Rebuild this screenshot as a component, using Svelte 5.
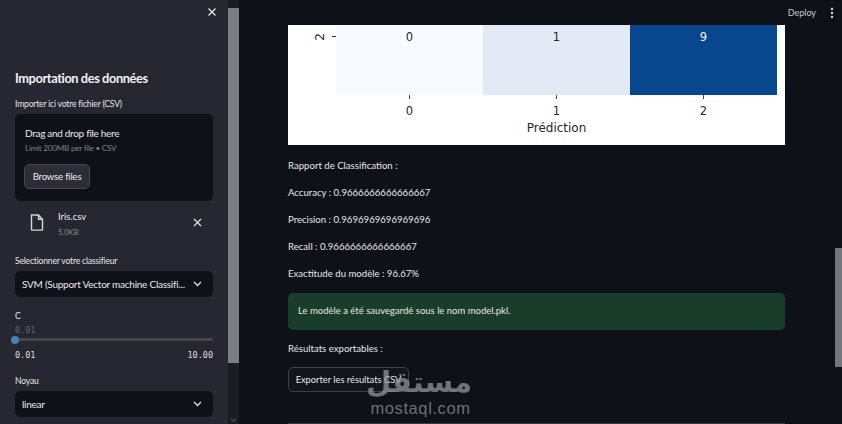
<script>
  let metrics = [
    "Rapport de Classification :",
    "Accuracy : 0.9666666666666667",
    "Precision : 0.9696969696969696",
    "Recall : 0.9666666666666667",
    "Exactitude du modèle : 96.67%"
  ];
  let cells = [
    { value: 0, tone: "c-low" },
    { value: 1, tone: "c-mid" },
    { value: 9, tone: "c-high" }
  ];
</script>

<div class="page">
  <aside class="sidebar">
    <div class="side-inner">
      <div class="close-row">
        <svg width="10" height="10" viewBox="0 0 10 10"><path d="M1.5 1.5l7 7M8.500 1.500l-7 7" stroke="#e6e6ea" stroke-width="1.300" /></svg>
      </div>
      <h2>Importation des données</h2>
      <div class="label first">Importer ici votre fichier (CSV)</div>
      <div class="upload">
        <div class="drag">Drag and drop file here</div>
        <div class="limit">Limit 200MB per file • CSV</div>
        <button class="browse">Browse files</button>
      </div>
      <div class="file">
        <svg class="file-icon" width="14" height="17" viewBox="0 0 14 17" fill="none"><path d="M1.500 1h7l4 4.200V15.500a.6.6 0 0 1-.6.6H2.100a.6.6 0 0 1-.6-.6zM8.500 1v4.200h4" stroke="#d5d6da" stroke-width="1.400" /></svg>
        <div class="file-text">
          <div class="file-name">Iris.csv</div>
          <div class="file-size">5.0KB</div>
        </div>
        <svg class="file-x" width="9" height="9" viewBox="0 0 9 9"><path d="M1 1l7 7M8 1l-7 7" stroke="#e0e0e4" stroke-width="1.300" /></svg>
      </div>
      <div class="label sel-label">Selectionner votre classifieur</div>
      <div class="select">
        <span class="sel-text">SVM (Support Vector machine Classifi...</span>
        <svg width="9" height="6" viewBox="0 0 9 6"><path d="M1 1l3.500 3.500L8 1" fill="none" stroke="#e0e0e4" stroke-width="1.300" /></svg>
      </div>
      <div class="label c-label">C</div>
      <div class="mono current">0.01</div>
      <div class="track"><span class="thumb"></span></div>
      <div class="mono range"><span>0.01</span><span>10.00</span></div>
      <div class="label noyau">Noyau</div>
      <div class="select">
        <span class="sel-text">linear</span>
        <svg width="9" height="6" viewBox="0 0 9 6"><path d="M1 1l3.500 3.500L8 1" fill="none" stroke="#e0e0e4" stroke-width="1.300" /></svg>
      </div>
    </div>
    <div class="side-scroll">
      <div class="thumb-bar"></div>
      <svg class="down" width="7" height="5" viewBox="0 0 7 5"><path d="M1 1l2.500 2.500L6 1" fill="none" stroke="#6d6e73" stroke-width="1" /></svg>
    </div>
  </aside>

  <main class="main">
    <header class="top">
      <span class="deploy">Deploy</span>
      <svg width="4" height="12" viewBox="0 0 4 12"><circle cx="2" cy="2" r="1.200" fill="#d8d8dc" /><circle cx="2" cy="6" r="1.200" fill="#d8d8dc" /><circle cx="2" cy="10" r="1.200" fill="#d8d8dc" /></svg>
    </header>

    <div class="content">
      <figure class="plot">
        <div class="plot-row">
          <div class="y-axis">
            <span class="y-num">2</span>
            <span class="y-tick"></span>
          </div>
          <div class="cells">
            {#each cells as cell}
              <div class="cell {cell.tone}">{cell.value}</div>
            {/each}
          </div>
        </div>
        <div class="x-axis">
          {#each cells as cell, i}
            <div class="x-col"><span class="x-tick"></span><span>{i}</span></div>
          {/each}
        </div>
        <div class="x-title">Prédiction</div>
      </figure>

      <div class="metrics">
        {#each metrics as line}
          <p>{line}</p>
        {/each}
      </div>

      <div class="success">Le modèle a été sauvegardé sous le nom model.pkl.</div>

      <p class="export-label">Résultats exportables :</p>
      <button class="export">Exporter les résultats CSV</button>
    </div>

    <div class="main-scroll"></div>
    <div class="bottom-line"></div>

    <div class="watermark">
      <div class="wm-ar" dir="rtl">مستقل</div>
      <div class="wm-en">mostaql.com</div>
    </div>
  </main>
</div>

<style>
  :global(body) {
    margin: 0;
    background: #0e1117;
    overflow: hidden;
  }

  .page {
    display: flex;
    width: 842px;
    height: 424px;
    overflow: hidden;
    font-family: Lato, "Noto Sans", sans-serif;
    color: #f0f1f3;
  }

  .sidebar {
    display: flex;
    width: 239px;
    flex: none;
    background: #262730;
  }

  .side-inner {
    width: 198px;
    padding: 0 15px;
  }

  .close-row {
    display: flex;
    justify-content: flex-end;
    padding: 7px 0 0;
    height: 13px;
    margin-right: -4px;
  }

  h2 {
    margin: 50px 0 0;
    font-size: 12.800px;
    letter-spacing: -0.4px;
    line-height: 17px;
    font-weight: 700;
    color: #f2f2f4;
  }

  .label {
    font-size: 8.600px;
    letter-spacing: -0.2px;
    line-height: 12px;
    color: #e4e5e8;
  }

  .first {
    margin-top: 11px;
  }

  .upload {
    box-sizing: border-box;
    height: 87px;
    margin-top: 4px;
    padding: 12px 10px;
    background: #0f1118;
    border-radius: 5px;
  }

  .drag {
    font-size: 10px;
    letter-spacing: -0.3px;
    line-height: 14px;
    color: #e8e8ea;
  }

  .limit {
    margin-top: 3px;
    font-size: 8.200px;
    letter-spacing: -0.27px;
    line-height: 11px;
    color: #7f8288;
  }

  .browse {
    display: block;
    box-sizing: border-box;
    width: 66px;
    height: 25px;
    margin-top: 10px;
    margin-left: -1px;
    padding: 0;
    font: inherit;
    font-size: 9.600px;
    letter-spacing: -0.2px;
    color: #eceded;
    background: #2c2d36;
    border: 1px solid #45464e;
    border-radius: 5px;
  }

  .file {
    display: flex;
    align-items: flex-start;
    height: 32px;
    margin-top: 7px;
    padding-left: 15px;
  }

  .file-icon {
    margin-top: 6px;
  }

  .file-text {
    margin-left: 14px;
    width: 135px;
  }

  .file-name {
    font-size: 9.500px;
    line-height: 15px;
    margin-top: 1px;
    color: #eeeeef;
  }

  .file-size {
    font-size: 7.600px;
    line-height: 12px;
    margin-top: 2px;
    color: #85878c;
  }

  .file-x {
    margin-top: 10px;
  }

  .sel-label {
    margin-top: 15px;
  }

  .select {
    display: flex;
    align-items: center;
    justify-content: space-between;
    box-sizing: border-box;
    height: 26px;
    margin-top: 4px;
    padding: 0 11px 0 7px;
    background: #0f1118;
    border-radius: 5px;
    font-size: 10px;
    letter-spacing: -0.25px;
    color: #e9e9eb;
  }

  .sel-text {
    white-space: nowrap;
  }

  .c-label {
    margin-top: 13px;
  }

  .mono {
    font-family: "DejaVu Sans Mono", "Liberation Mono", monospace;
    font-size: 8.500px;
    line-height: 12px;
  }

  .current {
    margin-top: 2px;
    color: #63656c;
  }

  .track {
    position: relative;
    height: 3px;
    margin-top: 2px;
    background: #44454d;
    border-radius: 2px;
  }

  .thumb {
    position: absolute;
    left: -4px;
    top: -2.500px;
    width: 8px;
    height: 8px;
    border-radius: 50%;
    background: #4a80b8;
  }

  .range {
    display: flex;
    justify-content: space-between;
    margin-top: 8px;
    color: #dcdde0;
  }

  .noyau {
    margin-top: 14px;
  }

  .side-scroll {
    position: relative;
    width: 11px;
    margin-left: auto;
    background: #1c1d24;
  }

  .thumb-bar {
    width: 11px;
    height: 355px;
    margin-top: 8px;
    background: #7d7e84;
  }

  .down {
    position: absolute;
    left: 2px;
    bottom: 1px;
  }

  .main {
    position: relative;
    flex: 1;
    min-width: 0;
    background: #0e1117;
  }

  .top {
    display: flex;
    align-items: center;
    justify-content: flex-end;
    gap: 14px;
    height: 25px;
    padding-right: 8px;
    box-sizing: border-box;
  }

  .deploy {
    font-size: 9px;
    color: #c9cacd;
  }

  .content {
    width: 497px;
    margin-left: 49px;
  }

  .plot {
    margin: 0;
    height: 120px;
    background: #fff;
    color: #262626;
    font-family: "DejaVu Sans", sans-serif;
    overflow: hidden;
  }

  .plot-row {
    display: flex;
    height: 70px;
  }

  .y-axis {
    position: relative;
    display: flex;
    align-items: flex-start;
    justify-content: flex-end;
    width: 48px;
    flex: none;
  }

  .y-num {
    position: absolute;
    left: 28px;
    top: 5px;
    font-size: 12px;
    line-height: 14px;
    transform: rotate(-90deg);
  }

  .y-tick {
    width: 4px;
    height: 1px;
    margin-top: 11px;
    background: #333;
  }

  .cells {
    display: flex;
    width: 441px;
  }

  .cell {
    flex: 1;
    padding-top: 4px;
    font-size: 11.500px;
    line-height: 16px;
    text-align: center;
  }

  .c-low {
    background: #f7fbff;
  }

  .c-mid {
    background: #e3eaf6;
  }

  .c-high {
    background: #08478d;
    color: #f2f5f9;
  }

  .x-axis {
    display: flex;
    width: 441px;
    margin-left: 48px;
  }

  .x-col {
    flex: 1;
    display: flex;
    flex-direction: column;
    align-items: center;
    font-size: 11.500px;
    line-height: 15px;
  }

  .x-tick {
    width: 1px;
    height: 4px;
    margin-bottom: 5px;
    background: #444;
  }

  .x-title {
    width: 441px;
    margin-left: 48px;
    margin-top: 1px;
    font-size: 12px;
    line-height: 17px;
    text-align: center;
  }

  .metrics {
    margin-top: 13.500px;
  }

  p {
    margin: 0;
    font-size: 9.600px;
    line-height: 14px;
    color: #e6e7e9;
  }

  .metrics p + p {
    margin-top: 13px;
  }

  .success {
    box-sizing: border-box;
    height: 37px;
    margin-top: 12.500px;
    padding: 0 10px;
    line-height: 36px;
    font-size: 9.500px;
    color: #e3e8e4;
    background: #1a3c2a;
    border-radius: 5px;
  }

  .export-label {
    margin-top: 12px;
  }

  .export {
    display: block;
    box-sizing: border-box;
    width: 121px;
    height: 25px;
    margin-top: 11px;
    padding: 0;
    font: inherit;
    font-size: 9.300px;
    color: #e6e7e9;
    background: #13151c;
    border: 1px solid #3d3f47;
    border-radius: 5px;
  }

  .main-scroll {
    position: absolute;
    right: 0;
    top: 248px;
    width: 7px;
    height: 119px;
    background: #73767a;
  }

  .bottom-line {
    position: absolute;
    left: 49px;
    bottom: 0;
    width: 497px;
    height: 1px;
    background: #3a3c42;
  }

  .watermark {
    position: absolute;
    left: 130px;
    top: 365px;
    width: 103px;
    text-align: center;
    color: rgba(150, 152, 156, 0.72);
    pointer-events: none;
  }

  .wm-ar {
    font-family: "DejaVu Sans", sans-serif;
    font-size: 29px;
    font-weight: 700;
    line-height: 35px;
    white-space: nowrap;
  }

  .wm-en {
    font-family: "Liberation Sans", sans-serif;
    font-size: 16.500px;
    line-height: 16px;
    letter-spacing: 0.6px;
  }
</style>
